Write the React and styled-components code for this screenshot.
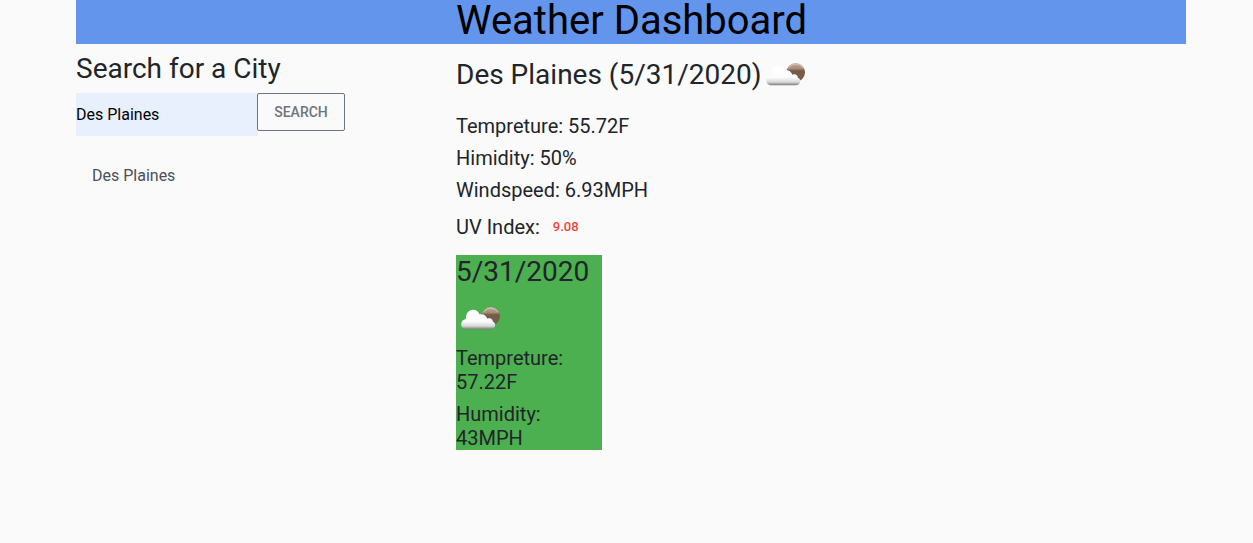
import React from 'react';
import styled, { createGlobalStyle } from 'styled-components';

const GlobalStyle = createGlobalStyle`
  *, *::before, *::after { box-sizing: border-box; }
  body {
    margin: 0;
    background: #fafafa;
    color: #212529;
    font: 400 16px/1.5 Roboto, "Liberation Sans", sans-serif;
  }
`;

const Container = styled.div`
  width: 1110px;
  margin-left: 76px;
`;

const Header = styled.header`
  height: 44px;
  padding-left: 380px;
  background: #6495ed;
`;

const Title = styled.h1`
  margin: 0;
  color: #000;
  font-size: 40px;
  font-weight: 400;
  line-height: 42px;
`;

const Columns = styled.main`
  display: grid;
  grid-template-columns: 380px 1fr;
`;

const Sidebar = styled.aside`
  padding-top: 8px;
`;

const Heading = styled.h3`
  display: flex;
  align-items: center;
  height: ${(p) => p.$height || 33}px;
  margin: 0;
  font-size: 28px;
  font-weight: 400;
  line-height: 33px;
  white-space: nowrap;
`;

const SearchForm = styled.form`
  display: flex;
  align-items: flex-start;
  margin-top: 8px;
`;

const SearchInput = styled.input`
  width: 182px;
  height: 43px;
  margin-right: -1px;
  padding: 0;
  border: 0;
  border-radius: 0;
  outline: 0;
  background: #e8f0fe;
  color: #000;
  font: inherit;
`;

const SearchButton = styled.button`
  width: 88px;
  height: 38px;
  padding: 0;
  border: 1px solid #6c757d;
  border-radius: 2px;
  background: #fafafa;
  color: #6c757d;
  font: 500 14px/14px Roboto, "Liberation Sans", sans-serif;
  text-transform: uppercase;
`;

const History = styled.ul`
  margin: 16px 0 0;
  padding: 0;
  list-style: none;
`;

const HistoryItem = styled.li`
  padding: 12px 16px;
  color: #495057;
  line-height: 24px;
`;

const Reading = styled.h5`
  margin: 0 0 8px;
  font-size: 20px;
  font-weight: 400;
  line-height: 24px;
`;

const CurrentWeather = styled.section`
  padding-top: 5px;
`;

const Readings = styled.div`
  margin-top: 15px;
`;

const UvReading = styled(Reading)`
  display: flex;
  align-items: center;
  height: 33px;
  margin: 0;
`;

const UvValue = styled.span`
  margin-left: 13px;
  color: #f44336;
  font-size: 13px;
  font-weight: 500;
`;

const ForecastCard = styled.article`
  width: 146px;
  height: 195px;
  margin-top: 12px;
  background: #4caf50;
`;

const IconRow = styled.div`
  height: 50px;
  margin: 5px 0 3px;
`;

const Icon = styled.svg`
  display: block;
  flex: none;
  width: 50px;
  height: 50px;
`;

function CloudIcon({ id }) {
  return (
    <Icon viewBox="0 0 50 50" role="img" aria-label="few clouds">
      <defs>
        <linearGradient id={`${id}-sun`} x1="0" y1="0" x2="0" y2="1">
          <stop offset="0" stopColor="#c5aa98" />
          <stop offset=".3" stopColor="#a58c78" />
          <stop offset=".42" stopColor="#765a45" />
          <stop offset="1" stopColor="#75604f" />
        </linearGradient>
        <linearGradient id={`${id}-cloud`} x1="0" y1="0" x2="0" y2="1">
          <stop offset="0" stopColor="#fff" />
          <stop offset=".6" stopColor="#fcfcfc" />
          <stop offset=".84" stopColor="#d7d7d7" />
          <stop offset="1" stopColor="#777" />
        </linearGradient>
      </defs>
      <circle cx="34.7" cy="23.3" r="9.3" fill={`url(#${id}-sun)`} />
      <path d="M27.6 19q3-4 7.6-4 4.600 .2 6.800 4" fill="none" stroke="#e7d8cd" strokeWidth="1" opacity=".65" />
      <path
        d="M10.800 36.300C7.300 36.300 5.200 34.200 5.200 31.400c0-2.900 1.800-4.900 4.700-5.400C9.700 20.500 12.800 16.700 17 16.700c3.100 0 5.500 1.700 6.600 4.700 3.600-1 6.900 1 7.700 4.300 3.200-1.300 5.300.2 5.600 3 1.500.5 2.300 1.700 2.300 3.100 0 2.800-1.700 4.500-4.700 4.500Z"
        fill={`url(#${id}-cloud)`}
      />
    </Icon>
  );
}

export default function App() {
  return (
    <>
      <GlobalStyle />
      <Container>
        <Header>
          <Title>Weather Dashboard</Title>
        </Header>
        <Columns>
          <Sidebar>
            <Heading>Search for a City</Heading>
            <SearchForm onSubmit={(e) => e.preventDefault()}>
              <SearchInput defaultValue="Des Plaines" aria-label="City" />
              <SearchButton type="submit">Search</SearchButton>
            </SearchForm>
            <History>
              <HistoryItem>Des Plaines</HistoryItem>
            </History>
          </Sidebar>
          <div>
            <CurrentWeather>
              <Heading $height={50}>
                Des Plaines (5/31/2020)
                <CloudIcon id="current" />
              </Heading>
              <Readings>
                <Reading>Tempreture: 55.72F</Reading>
                <Reading>Himidity: 50%</Reading>
                <Reading>Windspeed: 6.93MPH</Reading>
                <UvReading>
                  UV Index:<UvValue>9.08</UvValue>
                </UvReading>
              </Readings>
            </CurrentWeather>
            <ForecastCard>
              <Heading>5/31/2020</Heading>
              <IconRow>
                <CloudIcon id="forecast" />
              </IconRow>
              <Reading>Tempreture: 57.22F</Reading>
              <Reading>Humidity: 43MPH</Reading>
            </ForecastCard>
          </div>
        </Columns>
      </Container>
    </>
  );
}
